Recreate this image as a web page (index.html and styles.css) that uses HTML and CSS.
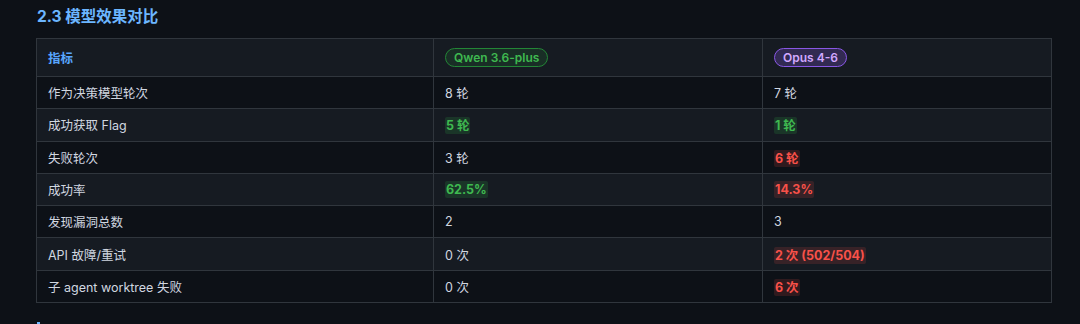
FILE: index.html
```html
<!DOCTYPE html>
<html lang="zh">
<head>
<meta charset="utf-8">
<link rel="stylesheet" href="styles.css">
</head>
<body>
<div class="page">
  <h3 class="title">2.3 模型效果对比</h3>
  <table class="cmp">
    <thead>
      <tr>
        <th class="c1">指标</th>
        <th class="c2"><span class="badge badge-green">Qwen 3.6-plus</span></th>
        <th class="c3"><span class="badge badge-purple">Opus 4-6</span></th>
      </tr>
    </thead>
    <tbody>
      <tr><td>作为决策模型轮次</td><td>8 轮</td><td>7 轮</td></tr>
      <tr><td>成功获取 Flag</td><td><span class="hl-g">5 轮</span></td><td><span class="hl-g">1 轮</span></td></tr>
      <tr><td>失败轮次</td><td>3 轮</td><td><span class="hl-r">6 轮</span></td></tr>
      <tr><td>成功率</td><td><span class="hl-g">62.5%</span></td><td><span class="hl-r">14.3%</span></td></tr>
      <tr><td>发现漏洞总数</td><td>2</td><td>3</td></tr>
      <tr><td>API 故障/重试</td><td>0 次</td><td><span class="hl-r">2 次 (502/504)</span></td></tr>
      <tr><td>子 agent worktree 失败</td><td>0 次</td><td><span class="hl-r">6 次</span></td></tr>
    </tbody>
  </table>
  <div class="next-mark"></div>
</div>
</body>
</html>
```
FILE: styles.css
```css
html, body {
  margin: 0;
  padding: 0;
  background: #0d1117;
  height: 100%;
  overflow: hidden;
}
.page {
  padding: 5px 28px 0 36px;
  font-family: "Inter", "Noto Sans CJK SC", sans-serif;
  color: #d1d7e0;
}
.title {
  margin: 0 0 10px 1px;
  font-size: 15.5px;
  line-height: 23px;
  font-weight: 700;
  color: #6cb6ff;
}
.next-mark {
  margin: 19px 0 0 1px;
  width: 3px;
  height: 3px;
  background: #6cb6ff;
}
.cmp {
  width: 1016px;
  border-collapse: collapse;
  font-size: 12.5px;
}
.cmp th, .cmp td {
  border: 1px solid #30363d;
  text-align: left;
  padding: 0 11px;
  white-space: nowrap;
}
.cmp th {
  height: 37px;
  background: #161b22;
  font-weight: 700;
  color: #58a6ff;
}
.cmp td {
  height: 31.3px;
}
.cmp .c1 { width: 374px; }
.cmp .c2 { width: 306px; }
.cmp tbody tr:nth-child(even) td {
  background: #161b22;
}
.badge {
  display: inline-block;
  font-size: 12px;
  line-height: 17px;
  padding: 0 8px;
  border-radius: 10px;
  font-weight: 600;
}
.badge-green {
  color: #3fb950;
  background: rgba(46, 160, 67, 0.15);
  border: 1px solid #238636;
}
.badge-purple {
  color: #d2a8ff;
  background: rgba(137, 87, 229, 0.25);
  border: 1px solid #8957e5;
}
.hl-g, .hl-r {
  font-weight: 700;
  padding: 1px 1px;
  border-radius: 2px;
}
.hl-g {
  color: #3fb950;
  background: rgba(46, 160, 67, 0.2);
}
.hl-r {
  color: #f85149;
  background: rgba(248, 81, 73, 0.15);
}
```
